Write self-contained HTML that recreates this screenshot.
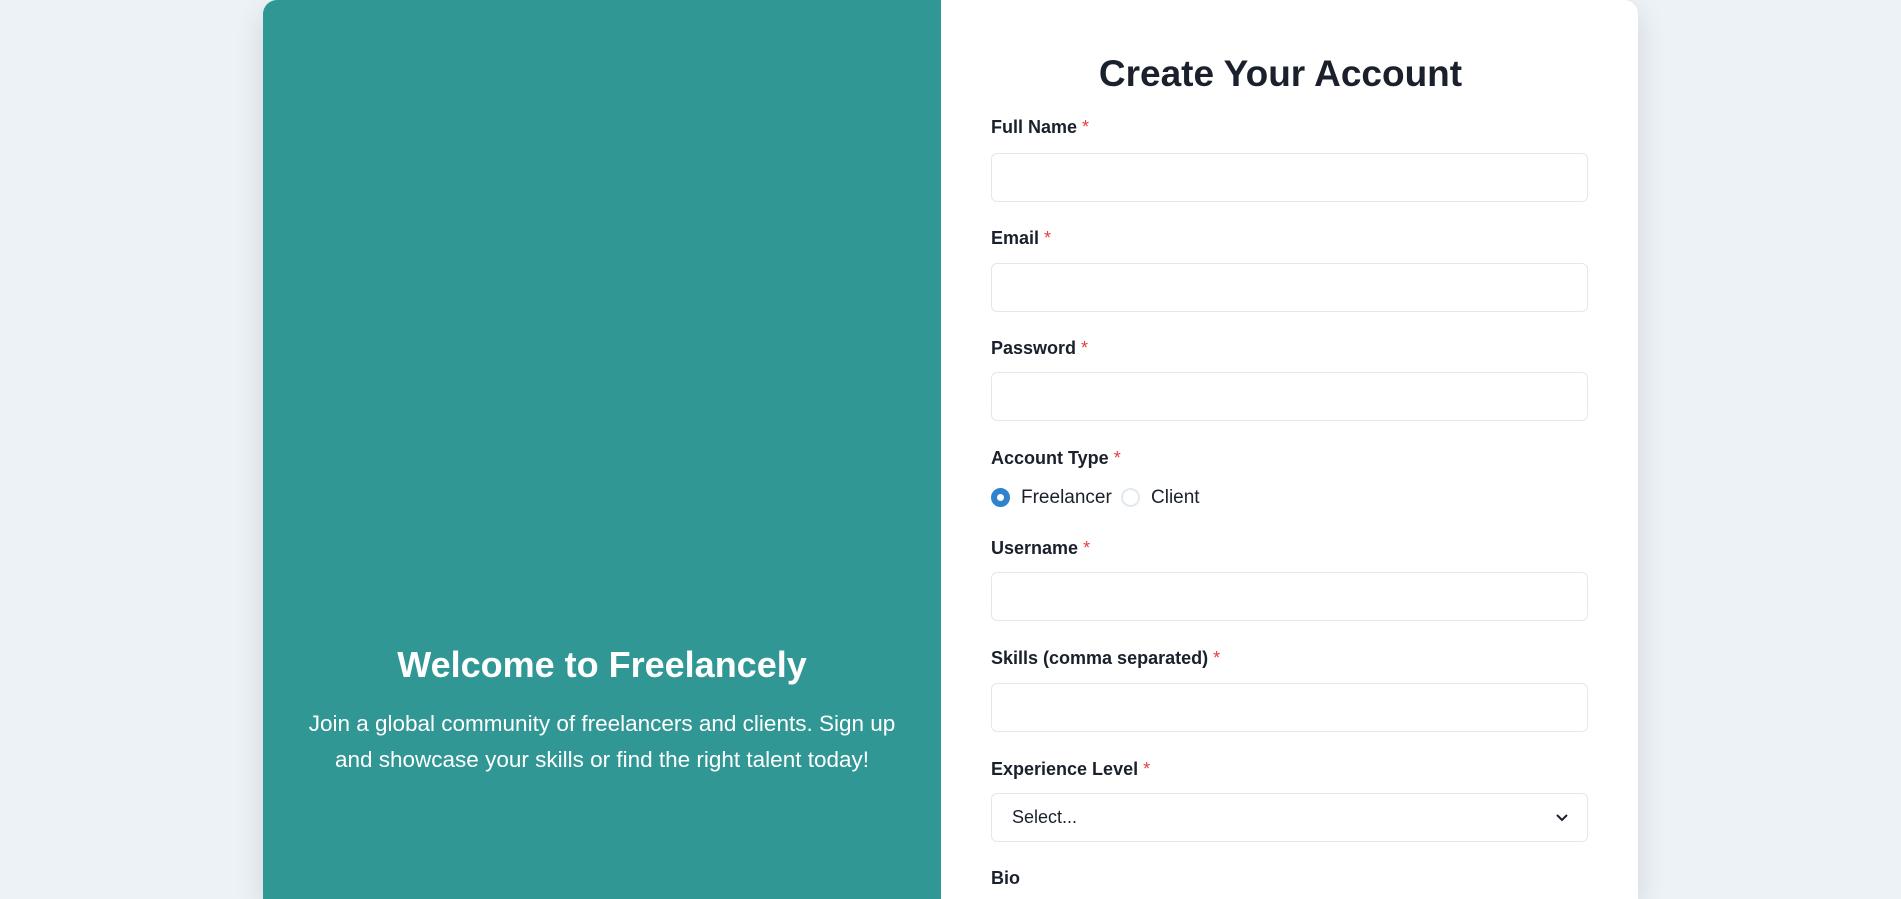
<!DOCTYPE html>
<html><head><meta charset="utf-8"><style>
*{box-sizing:border-box;margin:0;padding:0}
html,body{width:1901px;height:899px;overflow:hidden;background:#edf2f7;font-family:"Liberation Sans",sans-serif;color:#1a202c}
.card{position:absolute;left:263px;top:0;width:1375px;height:899px;background:#fff;border-radius:14px 14px 0 0;box-shadow:0 10px 30px rgba(0,0,0,.12);overflow:hidden}
.left{position:absolute;left:0;top:0;width:678px;height:100%;background:#319795;color:#fff;text-align:center}
.left h2{position:absolute;top:644px;left:0;width:100%;font-size:36px;font-weight:bold}
.left p{position:absolute;top:706px;left:39px;width:600px;font-size:22.5px;line-height:36px}
.right{position:absolute;left:678px;top:0;right:0}
h1{position:absolute;top:53px;left:0;width:100%;text-align:center;font-size:37px;font-weight:bold;padding-right:18px}
.lbl{position:absolute;left:50px;font-size:18px;font-weight:bold}
.lbl span{color:#e53e3e;font-weight:normal}
.inp{position:absolute;left:50px;width:597px;height:49px;border:1px solid #e2e8f0;border-radius:6px;background:#fff}
.sel{font-size:18px;padding:13px 0 0 20px;color:#1a202c}
.rad{position:absolute;top:488px;width:19px;height:19px;border-radius:50%}
.rt{position:absolute;top:487px;font-size:19px}
</style></head><body>
<div class="card">
<div class="left">
<h2>Welcome to Freelancely</h2>
<p>Join a global community of freelancers and clients. Sign up and showcase your skills or find the right talent today!</p>
</div>
<div class="right">
<h1>Create Your Account</h1>
<div class="lbl" style="top:117px">Full Name <span>*</span></div>
<div class="inp" style="top:153px"></div>
<div class="lbl" style="top:228px">Email <span>*</span></div>
<div class="inp" style="top:263px"></div>
<div class="lbl" style="top:338px">Password <span>*</span></div>
<div class="inp" style="top:372px"></div>
<div class="lbl" style="top:448px">Account Type <span>*</span></div>
<div class="rad" style="left:50px;border:6px solid #3182ce;background:#fff"></div>
<div class="rt" style="left:80px">Freelancer</div>
<div class="rad" style="left:180px;border:2px solid #e2e8f0"></div>
<div class="rt" style="left:210px">Client</div>
<div class="lbl" style="top:538px">Username <span>*</span></div>
<div class="inp" style="top:572px"></div>
<div class="lbl" style="top:648px">Skills (comma separated) <span>*</span></div>
<div class="inp" style="top:683px"></div>
<div class="lbl" style="top:759px">Experience Level <span>*</span></div>
<div class="inp sel" style="top:793px">Select...
<svg style="position:absolute;right:18px;top:19px" width="14" height="10" viewBox="0 0 14 10"><path d="M2 2l5 5 5-5" fill="none" stroke="#1a202c" stroke-width="2"/></svg></div>
<div class="lbl" style="top:868px">Bio</div>
</div>
</div>
</body></html>
